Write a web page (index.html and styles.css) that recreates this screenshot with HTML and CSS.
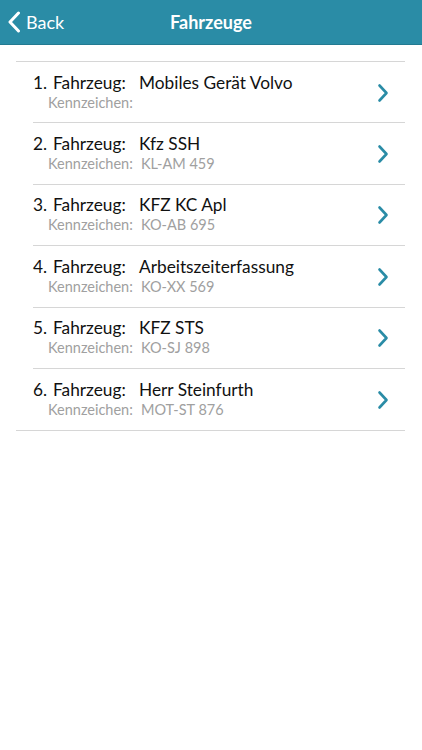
FILE: index.html
```html
<!DOCTYPE html>
<html lang="de">
<head>
<meta charset="utf-8">
<title>Fahrzeuge</title>
<link rel="stylesheet" href="styles.css">
</head>
<body>
<header class="navbar">
  <a class="back" href="#">
    <svg class="back-icon" viewBox="0 0 14 22" width="14" height="22"><path d="M11.5 2 L3 11 L11.5 20" fill="none" stroke="#fff" stroke-width="3" stroke-linecap="round" stroke-linejoin="round"/></svg>
    <span>Back</span>
  </a>
  <h1 class="title">Fahrzeuge</h1>
</header>
<main class="content">
  <ul class="list">
    <li class="row">
      <div class="texts">
        <div class="line1"><span class="num">1.</span><span class="lbl">Fahrzeug:</span><span class="val">Mobiles Gerät Volvo</span></div>
        <div class="line2"><span class="sublbl">Kennzeichen:</span><span class="subval"></span></div>
      </div>
      <svg class="chev" viewBox="0 0 12 20" width="12" height="20"><path d="M2.5 2.5 L9.5 10 L2.5 17.5" fill="none" stroke="#2a8ca6" stroke-width="2.6" stroke-linecap="round" stroke-linejoin="round"/></svg>
    </li>
    <li class="row">
      <div class="texts">
        <div class="line1"><span class="num">2.</span><span class="lbl">Fahrzeug:</span><span class="val">Kfz SSH</span></div>
        <div class="line2"><span class="sublbl">Kennzeichen:</span><span class="subval">KL-AM 459</span></div>
      </div>
      <svg class="chev" viewBox="0 0 12 20" width="12" height="20"><path d="M2.5 2.5 L9.5 10 L2.5 17.5" fill="none" stroke="#2a8ca6" stroke-width="2.6" stroke-linecap="round" stroke-linejoin="round"/></svg>
    </li>
    <li class="row">
      <div class="texts">
        <div class="line1"><span class="num">3.</span><span class="lbl">Fahrzeug:</span><span class="val">KFZ KC Apl</span></div>
        <div class="line2"><span class="sublbl">Kennzeichen:</span><span class="subval">KO-AB 695</span></div>
      </div>
      <svg class="chev" viewBox="0 0 12 20" width="12" height="20"><path d="M2.5 2.5 L9.5 10 L2.5 17.5" fill="none" stroke="#2a8ca6" stroke-width="2.6" stroke-linecap="round" stroke-linejoin="round"/></svg>
    </li>
    <li class="row">
      <div class="texts">
        <div class="line1"><span class="num">4.</span><span class="lbl">Fahrzeug:</span><span class="val">Arbeitszeiterfassung</span></div>
        <div class="line2"><span class="sublbl">Kennzeichen:</span><span class="subval">KO-XX 569</span></div>
      </div>
      <svg class="chev" viewBox="0 0 12 20" width="12" height="20"><path d="M2.5 2.5 L9.5 10 L2.5 17.5" fill="none" stroke="#2a8ca6" stroke-width="2.6" stroke-linecap="round" stroke-linejoin="round"/></svg>
    </li>
    <li class="row">
      <div class="texts">
        <div class="line1"><span class="num">5.</span><span class="lbl">Fahrzeug:</span><span class="val">KFZ STS</span></div>
        <div class="line2"><span class="sublbl">Kennzeichen:</span><span class="subval">KO-SJ 898</span></div>
      </div>
      <svg class="chev" viewBox="0 0 12 20" width="12" height="20"><path d="M2.5 2.5 L9.5 10 L2.5 17.5" fill="none" stroke="#2a8ca6" stroke-width="2.6" stroke-linecap="round" stroke-linejoin="round"/></svg>
    </li>
    <li class="row last">
      <div class="texts">
        <div class="line1"><span class="num">6.</span><span class="lbl">Fahrzeug:</span><span class="val">Herr Steinfurth</span></div>
        <div class="line2"><span class="sublbl">Kennzeichen:</span><span class="subval">MOT-ST 876</span></div>
      </div>
      <svg class="chev" viewBox="0 0 12 20" width="12" height="20"><path d="M2.5 2.5 L9.5 10 L2.5 17.5" fill="none" stroke="#2a8ca6" stroke-width="2.6" stroke-linecap="round" stroke-linejoin="round"/></svg>
    </li>
  </ul>
</main>
</body>
</html>
```
FILE: styles.css
```css
* { box-sizing: border-box; }
html, body {
  margin: 0;
  padding: 0;
  background: #fff;
  font-family: Lato, "Open Sans", sans-serif;
}
.navbar {
  height: 45px;
  background: #2a8ca6;
  border-bottom: 1px solid #237a91;
  display: flex;
  align-items: center;
  justify-content: center;
  position: relative;
}
.back {
  position: absolute;
  left: 7px;
  top: 0;
  height: 44px;
  display: flex;
  align-items: center;
  gap: 5px;
  color: #fff;
  text-decoration: none;
  font-size: 18px;
}
.back-icon { display: block; }
.title {
  margin: 0;
  color: #fff;
  font-size: 18px;
  font-weight: 700;
}
.content {
  padding: 16px 17px 0 16px;
}
.list {
  list-style: none;
  margin: 0;
  padding: 0;
  border-top: 1px solid #d6d6d6;
  border-bottom: 1px solid #d6d6d6;
}
.row {
  height: 61.4px;
  display: flex;
  align-items: center;
  padding: 0 16px 0 17px;
  position: relative;
}
.row::after {
  content: "";
  position: absolute;
  left: 17px;
  right: 0;
  bottom: 0;
  height: 1px;
  background: #d6d6d6;
}
.row.last::after { display: none; }
.texts {
  flex: 1;
  margin-bottom: 3px;
}
.line1 {
  display: flex;
  font-size: 17.3px;
  color: #111;
  line-height: 21px;
}
.num { width: 20px; }
.lbl { width: 86px; }
.line2 {
  display: flex;
  font-size: 14.5px;
  color: #a0a0a0;
  line-height: 17px;
  padding-top: 1px;
  padding-left: 15px;
}
.sublbl { width: 93px; }
.chev { display: block; }
```
